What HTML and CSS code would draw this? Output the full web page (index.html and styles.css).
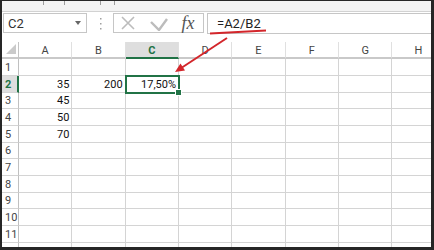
FILE: index.html
```html
<!DOCTYPE html>
<html>

<head>
  <meta name="viewport" content="width=device-width, initial-scale=1.0">
  <link rel="stylesheet" href="styles.css">
</head>

<body>
  <div class="frame">
    <div class="app">
      <div class="ribbon">
        <span class="tick t1"></span>
        <span class="tick t2"></span>
        <span class="tick t3"></span>
        <span class="tick t4"></span>
      </div>

      <div class="fbar">
        <div class="namebox">
          <span>C2</span>
          <svg width="6" height="4" viewBox="0 0 6 4"><path d="M0 0H6L3 4Z" fill="#666"/></svg>
        </div>
        <div class="grip">
          <svg width="3" height="13" viewBox="0 0 3 13">
            <rect x="1" y="1" width="1.5" height="1.5" fill="#a0a0a0"/>
            <rect x="1" y="6" width="1.5" height="1.5" fill="#a0a0a0"/>
            <rect x="1" y="11" width="1.5" height="1.5" fill="#a0a0a0"/>
          </svg>
        </div>
        <div class="fbtns">
          <span class="btn btn-x">
            <svg width="14" height="14" viewBox="0 0 14 14"><path d="M1 1L13 13M13 1L1 13" stroke="#bcbcbc" stroke-width="1.6" fill="none"/></svg>
          </span>
          <span class="btn btn-ok">
            <svg width="18" height="13" viewBox="0 0 18 13"><path d="M1 4L9 12L17 1" stroke="#bcbcbc" stroke-width="2.4" fill="none"/></svg>
          </span>
          <span class="btn fx">fx</span>
        </div>
        <div class="finput">=A2/B2</div>
      </div>

      <div class="sheet" id="sheet">
        <div class="cell corner">
          <svg width="10" height="10" viewBox="0 0 10 10"><path d="M10 0V10H0Z" fill="#cacaca"/></svg>
        </div>
      </div>
    </div>

    <svg class="marks" width="434" height="250" viewBox="0 0 434 250">
      <path d="M210 33.5Q238 32 266 30.5" stroke="#d3262b" stroke-width="2" fill="none"/>
      <path d="M227 38L182 67.5" stroke="#d3262b" stroke-width="2" fill="none"/>
      <path d="M175 72L185 70.5L180.5 63.5Z" fill="#d3262b"/>
    </svg>
  </div>

  <script>
    const cols = ['A', 'B', 'C', 'D', 'E', 'F', 'G', 'H'];
    const values = { A2: '35', B2: '200', C2: '17,50%', A3: '45', A4: '50', A5: '70' };
    const active = { col: 'C', row: 2 };
    const sheet = document.getElementById('sheet');

    function addCell(cls, text) {
      const div = document.createElement('div');
      div.className = 'cell ' + cls;
      div.textContent = text;
      sheet.appendChild(div);
    }

    cols.forEach(c => addCell('colhead' + (c === active.col ? ' on' : ''), c));

    // row 12 only peeks out under the frame, so it gets no label
    for (let r = 1; r <= 12; r++) {
      addCell('rowhead' + (r === active.row ? ' on' : ''), r < 12 ? r : '');
      cols.forEach(c => {
        const ref = c + r;
        addCell(ref === active.col + active.row ? 'selected' : '', values[ref] || '');
      });
    }
  </script>
</body>

</html>
```

FILE: styles.css
```css
body {
  margin: 0;
  padding: 0;
  font-family: Roboto, 'Liberation Sans', sans-serif;
}

.frame {
  position: relative;
  width: 434px;
  height: 250px;
  box-sizing: border-box;
  padding: 1px 3px 3px 2px;
  background-color: #262626;
}

.app {
  height: 100%;
  background-color: #fff;
  overflow: hidden;
  display: flex;
  flex-direction: column;
}

/* ribbon leftovers at the top */
.ribbon {
  flex: none;
  height: 10px;
  background-color: #f3f3f3;
  border-bottom: 1px solid #d2d2d2;
  display: flex;
  align-items: flex-start;
}

.tick {
  width: 1px;
  height: 4px;
  background-color: #9c9c9c;
}

.t1 { margin-left: 41px; }
.t2 { margin-left: 20px; }
.t3 { margin-left: 35px; }
.t4 { margin-left: 13px; }

/* formula bar */
.fbar {
  flex: none;
  height: 30px;
  box-sizing: border-box;
  padding-top: 1px;
  display: flex;
  align-items: flex-start;
}

.namebox {
  margin-left: 1px;
  width: 84px;
  height: 20px;
  box-sizing: border-box;
  border: 1px solid #c6c6c6;
  padding: 0 5px 0 4px;
  display: flex;
  align-items: center;
  justify-content: space-between;
  font-size: 13px;
  color: #333;
}

.grip {
  width: 26px;
  height: 20px;
  display: flex;
  align-items: center;
  justify-content: center;
}

.fbtns {
  width: 91px;
  height: 20px;
  box-sizing: border-box;
  border: 1px solid #c6c6c6;
  display: flex;
  align-items: center;
}

.btn {
  display: flex;
  align-items: center;
  justify-content: center;
}

.btn-x {
  width: 28px;
}

.btn-ok {
  width: 34px;
  padding-top: 3px;
}

.fx {
  width: 24px;
  font-family: 'Liberation Serif', serif;
  font-style: italic;
  font-size: 18px;
  color: #555;
  line-height: 18px;
}

.finput {
  flex: 1;
  margin-left: 3px;
  height: 21px;
  box-sizing: border-box;
  border: 1px solid #c6c6c6;
  border-right: none;
  padding-left: 9px;
  font-size: 13px;
  line-height: 19px;
  color: #222;
}

/* grid */
.sheet {
  flex: none;
  display: grid;
  grid-template-columns: 17px repeat(8, 53.33px);
  grid-template-rows: 17.33px repeat(12, 16.67px);
}

.cell {
  box-sizing: border-box;
  border-right: 1px solid #d4d4d4;
  border-bottom: 1px solid #d4d4d4;
  padding: 1px 2px 0;
  display: flex;
  align-items: center;
  justify-content: flex-end;
  font-size: 11px;
  color: #111;
  white-space: nowrap;
}

.corner {
  align-items: flex-end;
  padding: 0 2px 3px 0;
  border-right: 1px solid #c4c4c4;
  border-bottom: 2px solid #c9c9c9;
}

.colhead {
  justify-content: center;
  color: #444;
  border-right-color: #e0e0e0;
  border-bottom: 2px solid #c9c9c9;
}

.rowhead {
  justify-content: flex-start;
  padding-left: 3px;
  color: #444;
  border-right: 1px solid #c0c0c0;
}

.colhead.on {
  background-color: #dedede;
  color: #217346;
  font-weight: bold;
  border-bottom-color: #217346;
}

.rowhead.on {
  background-color: #dedede;
  color: #217346;
  font-weight: bold;
  border-right: 2px solid #217346;
}

.selected {
  position: relative;
  z-index: 1;
  outline: 2px solid #217346;
  outline-offset: -1px;
}

.selected::after {
  content: '';
  position: absolute;
  right: -4px;
  bottom: -4px;
  width: 5px;
  height: 5px;
  background-color: #217346;
  border: 1px solid #fff;
}

.marks {
  position: absolute;
  top: 0;
  left: 0;
  pointer-events: none;
}
```
